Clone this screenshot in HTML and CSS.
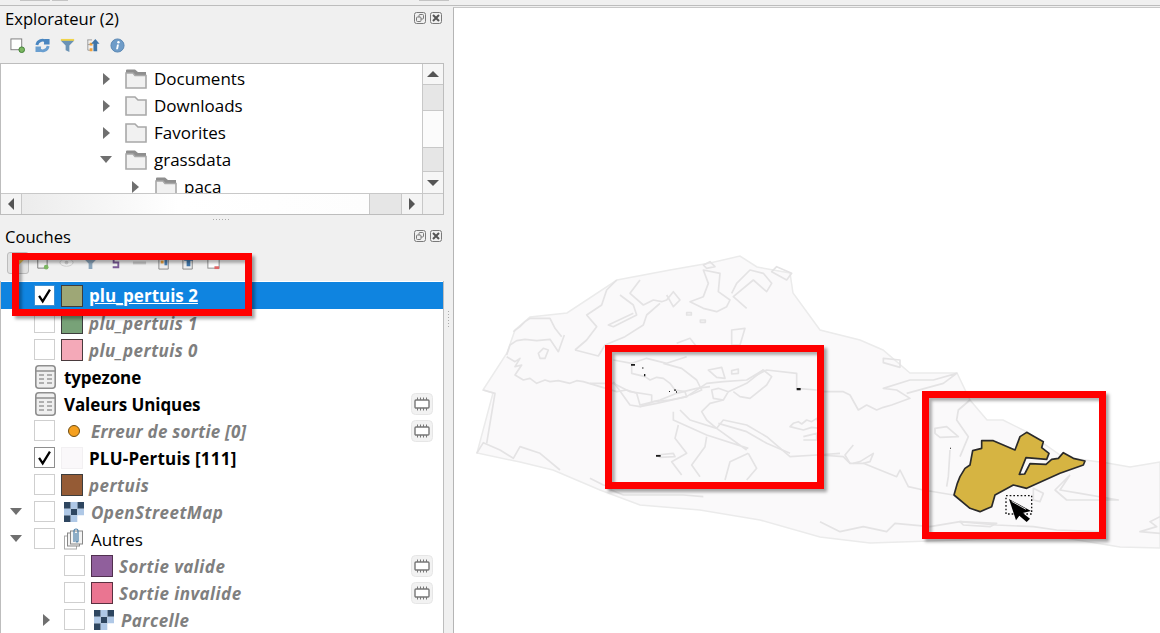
FILE: index.html
```html
<!DOCTYPE html>
<html lang="fr">
<head>
<meta charset="utf-8">
<title>QGIS</title>
<link rel="stylesheet" href="styles.css">
</head>
<body>
<svg class="defs" width="0" height="0" aria-hidden="true">
  <symbol id="float" viewBox="0 0 12 12"><rect x=".5" y=".5" width="11" height="11" rx="2" fill="none" stroke="#7a7a7a"/><rect x="5" y="2.500" width="4.500" height="4.500" rx="1" fill="none" stroke="#7a7a7a"/><rect x="2.500" y="5" width="4.500" height="4.500" rx="1" fill="#efefef" stroke="#7a7a7a"/></symbol>
  <symbol id="close" viewBox="0 0 12 12"><rect x=".5" y=".5" width="11" height="11" rx="2" fill="none" stroke="#7a7a7a"/><path d="M3 3l6 6M9 3l-6 6" stroke="#555" stroke-width="2"/></symbol>
  <symbol id="folder-open" viewBox="0 0 22 20"><path d="M1 4V1.500C1 1 1.400.6 2 .6h8l3 2.400h8v3H10L8 4z" fill="#8e8e8e"/><path d="M1 4h7l2 2.500h11V19H1z" fill="#f1f1f1" stroke="#a8a8a8" stroke-width="1.600"/></symbol>
  <symbol id="folder" viewBox="0 0 22 20"><path d="M1 1h9l3 3h8v15H1z" fill="#f1f1f1" stroke="#a8a8a8" stroke-width="1.600"/></symbol>
  <symbol id="check" viewBox="0 0 21 21"><path d="M4.500 11l4 6 8-13" fill="none" stroke="#000" stroke-width="2.500"/></symbol>
  <symbol id="table" viewBox="0 0 21 24"><rect x=".8" y=".8" width="19.400" height="22.400" rx="3" fill="#efefef" stroke="#8f8f8f" stroke-width="1.600"/><path d="M1 6h19" stroke="#8f8f8f" stroke-width="1.500"/><path d="M4 10h5M12 10h5M4 14h5M12 14h5M4 18h5M12 18h5" stroke="#9a9a9a" stroke-width="1.600"/></symbol>
  <symbol id="raster" viewBox="0 0 20 20"><rect width="20" height="20" fill="#fff"/><path d="M0 0h6.700v6.700H0zM13.300 0H20v6.700h-6.700zM6.700 6.700h6.600v6.600H6.700zM0 13.300h6.700V20H0z" fill="#2e4660"/><path d="M6.700 0h6.600v6.700H6.700zM0 6.700h6.700v6.600H0zM13.300 6.700H20v6.600h-6.700zM6.700 13.300h6.600V20H6.700z" fill="#afc8e6"/></symbol>
  <symbol id="chip" viewBox="0 0 22 22"><rect x=".5" y=".5" width="21" height="21" rx="4" fill="#f2f2f2" stroke="#e6e6e6"/><rect x="4" y="7" width="14" height="8" rx="1" fill="#fff" stroke="#777" stroke-width="1.400"/><path d="M6.500 4.500V7M9.500 4.500V7M12.500 4.500V7M15.500 4.500V7M6.500 15v2.500M9.500 15v2.500M12.500 15v2.500M15.500 15v2.500" stroke="#777"/></symbol>
</svg>

<div class="topstrip">
  <span class="stub stub-a"></span><span class="stub stub-b"></span><span class="stub stub-c"></span>
</div>
<div class="workspace">
  <aside class="side">
    <section class="explorer">
      <header class="dock-title">
        <h2>Explorateur (2)</h2>
        <svg class="dock-btn"><use href="#float"/></svg>
        <svg class="dock-btn"><use href="#close"/></svg>
      </header>
      <div class="toolbar explorer-tools">
        <svg class="tool" viewBox="0 0 16 16"><rect x="1" y="1" width="11.500" height="11.500" fill="#fff" stroke="#7b7b7b"/><circle cx="12.500" cy="12.500" r="3" fill="#7bb661" stroke="#3f7f33"/></svg>
        <svg class="tool" viewBox="0 0 16 16"><path d="M2 7.500A6 6 0 0 1 11.800 3.800" fill="none" stroke="#4a86c0" stroke-width="3"/><path d="M10 1h5.500v6H9.500z" fill="#4a86c0"/><path d="M14 8.500A6 6 0 0 1 4.200 12.200" fill="none" stroke="#6a9fd0" stroke-width="3"/><path d="M6 15H.5V9h6z" fill="#6a9fd0"/></svg>
        <svg class="tool" viewBox="0 0 16 16"><path d="M1 1h14v2l-5 5v7l-4-2V8L1 3z" fill="#6b93b5"/><path d="M1 1h14v2H1z" fill="#f1d44a"/></svg>
        <svg class="tool" viewBox="0 0 16 16"><path d="M2.500 2h5M3 2v11h4M3 7h4" fill="none" stroke="#999"/><path d="M5 5h3v3H5zM5 11h3v3H5z" fill="#f0a13a"/><path d="M11 1l4.500 5H13v8H9V6H6.500z" fill="#3f75a8"/></svg>
        <svg class="tool" viewBox="0 0 16 16"><circle cx="8" cy="8" r="7" fill="#6f9cc8" stroke="#5a86b2"/><circle cx="9" cy="4.500" r="1.300" fill="#fff"/><path d="M7.500 7h2l-1 5h-2z" fill="#fff"/></svg>
      </div>
      <div class="browser">
        <div class="browser-view">
          <div class="tree-row lvl-a"><i class="arrow-r"></i><svg class="folder"><use href="#folder-open"/></svg><span>Documents</span></div>
          <div class="tree-row lvl-a"><i class="arrow-r"></i><svg class="folder"><use href="#folder"/></svg><span>Downloads</span></div>
          <div class="tree-row lvl-a"><i class="arrow-r"></i><svg class="folder"><use href="#folder"/></svg><span>Favorites</span></div>
          <div class="tree-row lvl-a"><i class="arrow-d"></i><svg class="folder"><use href="#folder-open"/></svg><span>grassdata</span></div>
          <div class="tree-row lvl-b"><i class="arrow-r"></i><svg class="folder"><use href="#folder-open"/></svg><span>paca</span></div>
        </div>
        <div class="vbar">
          <div class="sb-btn"><i class="sb-up"></i></div>
          <div class="trough t-a"></div>
          <div class="thumb t-b"></div>
          <div class="trough t-c"></div>
          <div class="sb-btn"><i class="sb-down"></i></div>
        </div>
        <div class="hbar">
          <div class="sb-btn h"><i class="sb-left"></i></div>
          <div class="hthumb"></div>
          <div class="trough ht"></div>
          <div class="sb-btn h"><i class="sb-right"></i></div>
        </div>
        <div class="corner"></div>
      </div>
    </section>
    <div class="handle"></div>
    <section class="layers">
      <header class="dock-title">
        <h2>Couches</h2>
        <svg class="dock-btn"><use href="#float"/></svg>
        <svg class="dock-btn"><use href="#close"/></svg>
      </header>
      <div class="toolbar layer-tools">
        <span class="pressed"><svg class="tool" viewBox="0 0 16 16"><path d="M2 14l2-6 7-7 4 3-7 7z" fill="#e5b84a"/></svg></span>
        <svg class="tool" viewBox="0 0 16 16"><path d="M4 4h6V1h2v3h2v10H4z" fill="#f2f2f2" stroke="#777"/><circle cx="13" cy="13" r="2.500" fill="#7bb661"/></svg>
        <svg class="tool" viewBox="0 0 16 16"><ellipse cx="8" cy="8" rx="7" ry="4" fill="#f4f4f4" stroke="#ccc"/><circle cx="8" cy="8" r="2" fill="#ccc"/></svg>
        <svg class="tool" viewBox="0 0 16 16"><path d="M1 2h14v2l-5 5v6H6V9L1 4z" fill="#8aa4ba"/><path d="M1 1h14v3H1z" fill="#e8d166"/></svg>
        <svg class="tool" viewBox="0 0 16 16"><path d="M11 3H6v5h5v5H5" fill="none" stroke="#7a5a96" stroke-width="2"/></svg>
        <svg class="tool" viewBox="0 0 16 16"><path d="M1 7h14v3H1z" fill="#c8c8c8"/></svg>
        <svg class="tool" viewBox="0 0 16 16"><path d="M2 4h10v11H2z" fill="#eee" stroke="#888"/><path d="M8 1h3v10H8z" fill="#4a7fb0"/><path d="M4 6h3v3H4z" fill="#f0a13a"/></svg>
        <svg class="tool" viewBox="0 0 16 16"><path d="M2 4h10v11H2z" fill="#eee" stroke="#888"/><path d="M8 1l5 5h-3v6H6V6H3z" fill="#3f75a8"/></svg>
        <svg class="tool" viewBox="0 0 16 16"><rect x="2" y="1" width="12" height="13" fill="#fff" stroke="#888"/><path d="M9 12h5v3H9z" fill="#d66"/></svg>
      </div>
      <div class="layer-tree">
        <div class="row selected">
          <span class="twist"></span><span class="cb on"><svg><use href="#check"/></svg></span>
          <i class="swatch s-olive"></i><span class="label sel">plu_pertuis 2</span>
        </div>
        <div class="row">
          <span class="twist"></span><span class="cb"></span>
          <i class="swatch s-green"></i><span class="label off">plu_pertuis 1</span>
        </div>
        <div class="row">
          <span class="twist"></span><span class="cb"></span>
          <i class="swatch s-pink"></i><span class="label off">plu_pertuis 0</span>
        </div>
        <div class="row">
          <span class="twist"></span><svg class="tbl"><use href="#table"/></svg><span class="label tb">typezone</span>
        </div>
        <div class="row">
          <span class="twist"></span><svg class="tbl"><use href="#table"/></svg><span class="label tb">Valeurs Uniques</span>
          <svg class="chip"><use href="#chip"/></svg>
        </div>
        <div class="row">
          <span class="twist"></span><span class="cb"></span>
          <span class="sym"><i class="dot"></i></span><span class="label off tight">Erreur de sortie [0]</span>
          <svg class="chip"><use href="#chip"/></svg>
        </div>
        <div class="row">
          <span class="twist"></span><span class="cb on"><svg><use href="#check"/></svg></span>
          <i class="swatch s-blank"></i><span class="label on-layer">PLU-Pertuis [111]</span>
        </div>
        <div class="row">
          <span class="twist"></span><span class="cb"></span>
          <i class="swatch s-brown"></i><span class="label off">pertuis</span>
        </div>
        <div class="row">
          <span class="twist"><i class="arrow-d"></i></span><span class="cb"></span>
          <span class="sym"><svg class="ras"><use href="#raster"/></svg></span><span class="label off">OpenStreetMap</span>
        </div>
        <div class="row">
          <span class="twist"><i class="arrow-d"></i></span><span class="cb"></span>
          <span class="sym"><svg class="grp" viewBox="0 0 20 22"><rect x=".5" y="8" width="12" height="13" fill="#fff" stroke="#aaa"/><rect x="3.500" y="5" width="12" height="13" fill="#f4f4f4" stroke="#888"/><rect x="6.500" y="3" width="12" height="13" fill="#f4f4f4" stroke="#888"/><path d="M10 14V3a2 2 0 0 1 4 0v10a1 1 0 0 1-2 0V5" fill="none" stroke="#4a7fa8" stroke-width="1.200"/></svg></span><span class="label group">Autres</span>
        </div>
        <div class="row">
          <span class="twist deep"></span><span class="cb"></span>
          <i class="swatch s-purple"></i><span class="label off">Sortie valide</span>
          <svg class="chip"><use href="#chip"/></svg>
        </div>
        <div class="row">
          <span class="twist deep"></span><span class="cb"></span>
          <i class="swatch s-rose"></i><span class="label off">Sortie invalide</span>
          <svg class="chip"><use href="#chip"/></svg>
        </div>
        <div class="row">
          <span class="twist deep"><i class="arrow-r"></i></span><span class="cb"></span>
          <span class="sym"><svg class="ras"><use href="#raster"/></svg></span><span class="label off">Parcelle</span>
        </div>
      </div>
      <div class="callout c-layer"></div>
    </section>
  </aside>
  <div class="splitter"><i></i></div>
  <main class="map">
    <svg class="map-svg" viewBox="454 8 706 625" preserveAspectRatio="none">
      <path class="land" d="M483 390 507 353 515 330 530 317 567 313 617 280 670 270 710 263 740 256 757 267 790 273 793 293 820 330 860 340 883 350 910 373 957 373 970 400 987 420 1003 420 1027 432 1063 457 1107 463 1130 467 1160 462V548L1120 547 1053 536 960 540 870 543 820 537 760 520 700 510 640 505 600 490 553 470 520 462 477 453 493 393Z"/>
      <g transform="translate(470 250) scale(.33333)" class="lines">
        <path d="M110 320 135 335 150 325 135 350 155 345 135 375 160 390 180 385 200 400 225 390 240 395 265 392 300 400 320 392 340 395 390 410 440 425 470 420 500 430 510 465 570 450 620 430 680 415 720 410"/>
        <path d="M110 315 120 285 140 272 165 268 200 272 240 268 265 305 283 255"/>
        <path d="M130 245 150 230 165 215 180 205 240 205 255 235 275 260"/>
        <path d="M315 300 350 270 380 230 350 195 395 165 410 120 440 90"/>
        <path d="M510 90 480 130 520 165 550 150 575 155 590 150 610 125 630 150 610 170 590 135"/>
        <path d="M315 300 385 318 405 285 465 260 520 225 530 195 570 160"/>
        <path d="M450 135 490 165 500 195 430 230 415 225 490 190"/>
        <path d="M205 310 220 295 235 300 225 325 210 325Z"/>
        <path d="M660 155 700 140 715 100 700 60 750 70 745 125 780 150 770 170 740 185 700 175Z"/>
        <path d="M785 130 800 100 840 60 880 70 905 100 890 125 850 90 790 140 830 175"/>
        <path d="M650 188h14v7h-14zM691 210h15v7h-15z"/>
        <path d="M785 240 825 235 810 285 785 285Z"/>
        <path d="M620 280 660 265 680 290 640 290"/>
        <path d="M700 45 720 35 735 50 710 55Z"/>
        <path d="M905 65 920 50 965 70 950 90Z"/>
        <path d="M20 610 40 578 90 600 130 625 150 590 210 610 270 660"/>
        <path d="M40 420 75 430 50 580"/>
      </g>
      <g transform="translate(590 340) scale(.33333)" class="lines">
        <path d="M70 60 125 70 125 100 165 110 180 120 200 112 220 115 240 130 255 150 285 155 290 170 240 180 190 185 150 200 120 195 70 125"/>
        <path d="M125 70 170 55 230 70 290 50"/>
        <path d="M0 130 70 130 120 155 185 165 185 190"/>
        <path d="M150 200 200 190 290 170 350 130 400 125 470 120 520 90"/>
        <path d="M220 70 275 85 320 120 335 150 300 165"/>
        <path d="M365 150 385 145 415 155 400 180 370 175Z"/>
        <path d="M355 90 395 82 405 115 380 112ZM425 92 445 87 445 100 425 102Z"/>
        <path d="M415 155 470 130 520 90 545 110 530 135 480 175 450 170 430 155"/>
        <path d="M400 180 360 190 335 215 350 240 380 265"/>
        <path d="M270 210 300 240 380 265 470 330M250 215 250 240 350 285 475 325"/>
        <path d="M265 255 255 295 290 340 245 365 275 405"/>
        <path d="M350 290 345 320 305 375 330 410"/>
        <path d="M475 340 420 365 405 420M475 340 500 385 470 420"/>
        <path d="M380 265 400 240 470 255 530 290 600 350 680 345 750 340"/>
        <path d="M385 250 470 275 530 310 600 340"/>
        <path d="M490 110 530 90 620 100 620 145 680 150"/>
        <path d="M600 260 610 250 625 245 635 252 650 240 665 245 680 235 690 265 665 262 640 270Z"/>
        <path d="M640 290 680 280 680 300 640 300"/>
        <path d="M0 415 40 435 100 445 50 445 100 465 280 465 340 470"/>
        <path d="M200 345 250 340 255 350 210 352Z"/>
      </g>
      <g transform="translate(820 330) scale(.33333)" class="lines">
        <path d="M0 375 70 380 90 400 130 400 230 440 240 420 265 470 310 480 400 495"/>
        <path d="M90 400 75 375 100 345M100 400 120 395 160 370 150 395 130 400"/>
        <path d="M0 185 70 185 90 195 115 240 140 225 170 240 190 232 215 225 270 205 230 180 190 175 270 150 340 150 410 130 370 160 260 190"/>
        <path d="M190 85 240 90 240 112 190 98Z"/>
        <path d="M0 575 60 605 130 590 200 605 225 580 330 590 420 575 530 585 640 590 710 600 840 605"/>
        <path d="M345 295 380 290 415 320 360 322 345 310Z"/>
        <path d="M380 470 385 440 390 360M450 210 415 240 410 270 445 320 420 380"/>
        <path d="M420 575 530 580 510 590 430 585Z"/>
        <path d="M640 475 670 490 660 515 640 510Z"/>
        <path d="M750 435 705 480 740 510 800 510 895 510 780 490 720 480 750 435"/>
        <path d="M1020 560 990 575 1010 590 960 605 1020 610"/>
      </g>
      <g transform="translate(590 340) scale(.33333)" class="specks">
        <path d="M123 72h12v5h-12zM157 82h3v4h-3zM162 102h4v7h-4zM237 153h3v3h-3zM253 148h4v5h-4zM258 154h3v4h-3zM620 144h12v7h-12zM198 345h14v5h-14z"/>
      </g>
      <g transform="translate(900 380) scale(.33333)">
        <path class="speck-solo" d="M150 203h3v3h-3z"/>
        <path class="zone" d="M162 345 172 310 180 290 195 265 210 255 218 212 245 205 245 182 280 182 345 210 360 170 380 157 430 185 425 203 447 220 440 238 378 233 358 283 374 282 390 251 438 253 455 238 475 235 490 218 520 235 555 243 550 255 480 280 380 325 340 315 285 345 275 380 240 395 210 385Z"/>
        <rect class="marquee" x="318" y="347" width="77" height="55"/>
        <path class="pointer" d="M327 357 393 393 368 399 390 416 380 426 358 407 348 421Z"/>
        <path class="pointer-shine" d="M335 364 378 388"/>
      </g>
    </svg>
    <div class="callout c-mid"></div>
    <div class="callout c-east"></div>
  </main>
</div>
</body>
</html>
```

FILE: styles.css
```css
* { box-sizing: border-box; }
html, body { margin: 0; height: 100%; overflow: hidden; }
body {
  background: #f0f0f0;
  font-family: "Open Sans", "Noto Sans", sans-serif;
  font-size: 17px;
  color: #000;
  display: flex;
  flex-direction: column;
}
.defs { position: absolute; }

.topstrip {
  height: 6px;
  border-bottom: 1px solid #bdbdbd;
  flex: none;
  display: flex;
  gap: 2px;
  padding-left: 20px;
  align-items: flex-start;
}
.stub { display: block; height: 1px; background: #c4c4c4; }
.stub-a { width: 30px; }
.stub-b { width: 16px; }
.stub-c { width: 30px; margin-left: 349px; }

.workspace { flex: 1; display: flex; min-height: 0; }
.side { width: 444px; flex: none; display: flex; flex-direction: column; }

.explorer { height: 209px; flex: none; display: flex; flex-direction: column; }
.dock-title {
  height: 25px;
  flex: none;
  display: flex;
  align-items: center;
  gap: 3px;
  padding: 0 2px 0 5px;
}
.dock-title h2 { margin: 0 auto 0 0; font-size: 16.600px; font-weight: 400; line-height: 24px; }
.dock-btn { width: 12px; height: 12px; margin-left: 1px; position: relative; top: -1px; }

.toolbar { display: flex; align-items: center; flex: none; }
.explorer-tools { height: 32px; gap: 10px; padding: 0 0 4px 10px; }
.tool { width: 15px; height: 15px; flex: none; }

.browser {
  height: 152px;
  flex: none;
  background: #fff;
  border: 1px solid #bdbdbd;
  display: grid;
  grid-template-columns: 1fr 21px;
  grid-template-rows: 1fr 21px;
}
.browser-view { overflow: hidden; padding-top: 1px; min-width: 0; }
.tree-row { height: 27px; display: flex; align-items: center; white-space: nowrap; }
.tree-row span { margin-left: 7px; }
.tree-row.lvl-a { padding-left: 102px; }
.tree-row.lvl-b { padding-left: 131px; }
.tree-row .arrow-r { margin-right: 15px; }
.tree-row.lvl-b .arrow-r { margin-right: 16px; }
.tree-row.lvl-a .arrow-d { margin-left: -3px; margin-right: 13px; }
.folder { width: 22px; height: 20px; flex: none; }

.arrow-r { display: block; width: 0; height: 0; border-style: solid; border-width: 6.500px 0 6.500px 7px; border-color: transparent transparent transparent #6f6f6f; }
.arrow-d { display: block; width: 0; height: 0; border-style: solid; border-width: 7px 6.500px 0; border-color: #6f6f6f transparent transparent; }

.vbar { display: flex; flex-direction: column; border-left: 1px solid #c8c8c8; }
.sb-btn { height: 21px; flex: none; background: #f6f6f6; display: flex; align-items: center; justify-content: center; border-bottom: 1px solid #c8c8c8; }
.sb-btn:last-child { border-bottom: 0; }
.trough { background: #e6e6e6; }
.thumb { background: #fbfbfb; border-bottom: 1px solid #c8c8c8; border-top: 1px solid #c8c8c8; }
.t-a { height: 25px; flex: none; }
.t-b { height: 38px; flex: none; }
.t-c { flex: 1; border-bottom: 1px solid #c8c8c8; }
.sb-up, .sb-down, .sb-left, .sb-right { display: block; width: 0; height: 0; border-style: solid; }
.sb-up { border-width: 0 6px 6px; border-color: transparent transparent #555; }
.sb-down { border-width: 6px 6px 0; border-color: #555 transparent transparent; }
.sb-left { border-width: 6px 6px 6px 0; border-color: transparent #555 transparent transparent; }
.sb-right { border-width: 6px 0 6px 6px; border-color: transparent transparent transparent #555; }

.hbar { display: flex; border-top: 1px solid #c8c8c8; min-width: 0; }
.sb-btn.h { width: 21px; height: auto; border-bottom: 0; border-right: 1px solid #c8c8c8; background: #f4f4f4; }
.sb-btn.h:last-child { border-right: 0; border-left: 1px solid #c8c8c8; }
.hthumb { flex: 1; background: linear-gradient(to right, #ececec, #fff 45%, #fdfdfd); border-right: 1px solid #c8c8c8; }
.trough.ht { width: 31px; flex: none; }
.corner { border-top: 1px solid #c8c8c8; border-left: 1px solid #c8c8c8; background: #f0f0f0; }

.handle { height: 9px; flex: none; display: flex; justify-content: center; align-items: center; }
.handle::before { content: ""; width: 18px; height: 1px; background: repeating-linear-gradient(to right, #aaa 0 1px, transparent 1px 3px); }

.layers { flex: 1; min-height: 0; display: flex; flex-direction: column; position: relative; }
.layer-tools { height: 32px; gap: 9.500px; padding: 0 0 5px 7px; }
.pressed { width: 22px; height: 22px; margin-right: -4.500px; display: flex; align-items: center; justify-content: center; background: #e2e2e2; border: 1px solid #bdbdbd; border-radius: 3px; }

.layer-tree {
  flex: 1;
  min-height: 0;
  overflow: hidden;
  background: #fff;
  border-left: 1px solid #bdbdbd;
  border-right: 1px solid #bdbdbd;
  padding-top: 1px;
}
.row { height: 27px; display: flex; align-items: center; white-space: nowrap; font-size: 17px; }
.row.selected { background: #0f84e0; }
.twist { width: 33px; flex: none; display: flex; justify-content: flex-end; padding-right: 12px; }
.twist.deep { width: 63px; padding-right: 14px; }
.cb { width: 21px; height: 21px; flex: none; background: #fff; border: 1px solid #cfcfcf; display: block; }
.cb svg { display: block; width: 19px; height: 19px; }
.cb.on { border-color: #8f8f8f; }
.selected .cb.on { border-color: #3f8fd0; }
.swatch { display: block; width: 22px; height: 22px; flex: none; margin-left: 6px; border: 1px solid #3d3d3d; }
.s-olive { background: #9ea776; }
.s-green { background: #78a278; }
.s-pink { background: #f4a9b8; border-color: #4a3a3d; }
.s-blank { background: #faf8fa; border-color: #f2f0f2; }
.s-brown { background: #955b35; }
.s-purple { background: #905f9c; border-color: #50304f; }
.s-rose { background: #ea7591; border-color: #5a3040; }
.sym { width: 24px; margin-left: 6px; padding-left: 1px; display: flex; justify-content: center; align-items: center; flex: none; }
.dot { display: block; width: 12px; height: 12px; border-radius: 50%; background: #f5a01f; border: 1px solid #6f4d12; }
.ras { width: 20px; height: 20px; display: block; }
.grp { width: 20px; height: 22px; display: block; }
.tbl { width: 21px; height: 24px; flex: none; margin-left: 1px; }
.label { margin: 2px 0 0 6px; font-weight: 700; line-height: 20px; }
.label.sel { color: #fff; text-decoration: underline; margin-top: 1px; }
.label.off { color: #7f7f7f; font-style: italic; letter-spacing: .45px; }
.label.off.tight { letter-spacing: .25px; }
.label.tb { margin-left: 8px; letter-spacing: -.1px; }
.label.on-layer { letter-spacing: .2px; }
.label.group { font-weight: 400; }
.chip { width: 22px; height: 22px; margin-left: auto; margin-right: 10px; flex: none; }

.splitter { width: 9px; flex: none; display: flex; align-items: center; justify-content: center; padding-top: 0; }
.splitter i { display: block; width: 1px; height: 18px; background: repeating-linear-gradient(to bottom, #aaa 0 1px, transparent 1px 3px); }

.map {
  flex: 1;
  min-width: 0;
  position: relative;
  background: #fff;
  border-left: 1px solid #b5b5b5;
  border-top: 1px solid #c8c8c8;
  margin-top: 1px;
  overflow: hidden;
}
.map-svg { display: block; width: 100%; height: 100%; }
.land { fill: #faf9fa; stroke: #ebebeb; stroke-width: 1.500; }
.lines path { fill: none; stroke: #e4e3e4; stroke-width: 5; stroke-linejoin: round; }
.specks path, .speck-solo { fill: #1b1b1b; }
.zone { fill: #d6b442; stroke: #2a2a2a; stroke-width: 5; stroke-linejoin: round; }
.marquee { fill: none; stroke: #111; stroke-width: 4; stroke-dasharray: 5 6; }
.pointer { fill: #000; }
.pointer-shine { stroke: #ddd; stroke-width: 3; fill: none; }

.callout {
  position: absolute;
  border: 7px solid #f00;
  box-shadow: 3px 3px 3px rgba(0, 0, 0, .35), inset 3px 3px 3px rgba(0, 0, 0, .3);
  pointer-events: none;
}
.c-layer { left: 12px; top: 29px; width: 240px; height: 63px; }
.c-mid { left: 151px; top: 337px; width: 219px; height: 144px; }
.c-east { left: 468px; top: 383px; width: 184px; height: 148px; }
```
